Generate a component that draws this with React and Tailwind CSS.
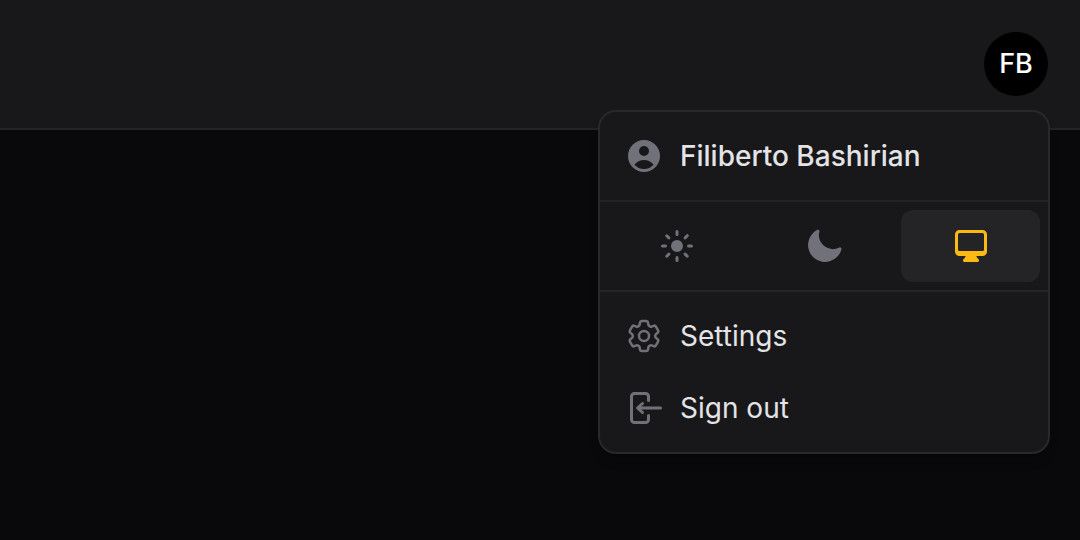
import {
  HiMiniUserCircle,
  HiMiniSun,
  HiMiniMoon,
  HiMiniComputerDesktop,
  HiMiniArrowLeftOnRectangle,
  HiOutlineCog6Tooth,
} from "react-icons/hi2";

const themes = [
  { label: "Light theme", Icon: HiMiniSun },
  { label: "Dark theme", Icon: HiMiniMoon },
  { label: "System theme", Icon: HiMiniComputerDesktop, active: true },
];

function MenuItem({ href, Icon, children }) {
  return (
    <a href={href} className="flex items-center gap-4 rounded-xl p-4 hover:bg-white/5">
      <Icon className="size-10 text-[#71717a]" />
      <span>{children}</span>
    </a>
  );
}

function UserMenu() {
  return (
    <div className="absolute top-full right-0 z-10 mt-4 w-112 rounded-2xl bg-[#18181b] text-[28px] leading-10 text-[#e4e4e7] ring-2 ring-[#29292c] shadow-lg">
      <div className="flex items-center gap-4 border-b-2 border-[#242427] p-6 font-medium">
        <HiMiniUserCircle className="size-10 text-[#71717a]" />
        <span>Filiberto Bashirian</span>
      </div>
      <div className="grid grid-cols-3 gap-2 border-b-2 border-[#242427] p-2">
        {themes.map(({ label, Icon, active }) => (
          <button
            key={label}
            type="button"
            aria-label={label}
            aria-pressed={Boolean(active)}
            className={
              active
                ? "flex justify-center rounded-xl bg-[#242427] p-4 text-[#fbb913]"
                : "flex justify-center rounded-xl p-4 text-[#71717a]"
            }
          >
            <Icon className="size-10" />
          </button>
        ))}
      </div>
      <nav className="p-2">
        <MenuItem href="#settings" Icon={HiOutlineCog6Tooth}>Settings</MenuItem>
        <MenuItem href="#sign-out" Icon={HiMiniArrowLeftOnRectangle}>Sign out</MenuItem>
      </nav>
    </div>
  );
}

export default function App() {
  return (
    <div className="min-h-screen bg-[#09090b] font-['Inter',sans-serif]">
      <header className="flex items-center justify-end border-b-2 border-[#242427] bg-[#18181b] p-8">
        <div className="relative">
          <button
            type="button"
            aria-label="User menu"
            aria-expanded="true"
            className="flex size-16 items-center justify-center rounded-full bg-black text-[27px] leading-10 font-medium text-white"
          >
            FB
          </button>
          <UserMenu />
        </div>
      </header>
    </div>
  );
}
